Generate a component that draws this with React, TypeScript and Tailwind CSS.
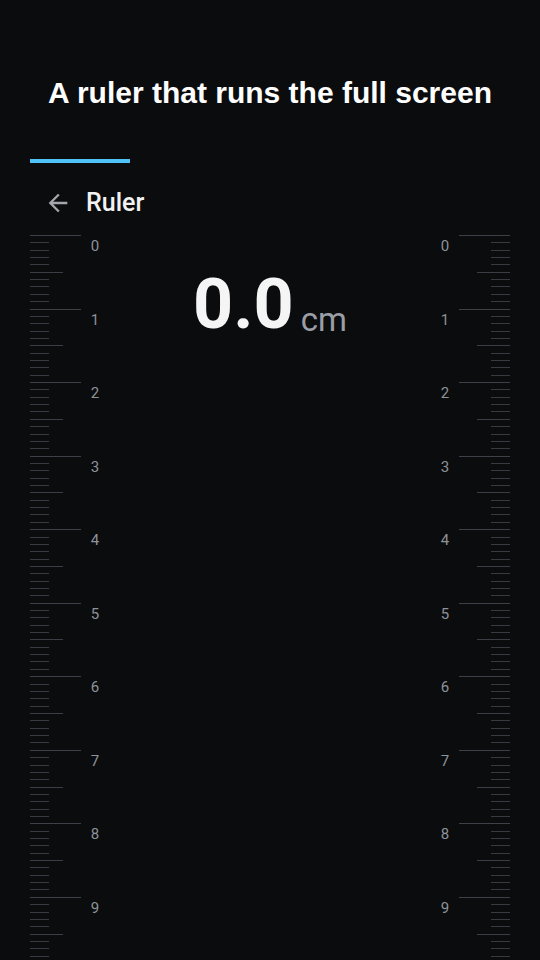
import { Fragment } from "react";

const CM_COUNT = 10;

function ArrowBack() {
  return (
    <svg width="28" height="28" viewBox="0 0 24 24" fill="#a3a6ad">
      <path d="M20 11H7.83l5.59-5.59L12 4l-8 8 8 8 1.41-1.41L7.83 13H20v-2z" />
    </svg>
  );
}

function Ticks({ side }: { side: "left" | "right" }) {
  const rows = Array.from({ length: 10 }, (_, i) => i);
  return (
    <div className={`flex w-[51px] flex-col ${side === "left" ? "items-start" : "items-end"}`}>
      {rows.map((i) => (
        <div key={i} className={`flex h-[7.355px] w-full shrink-0 flex-col ${side === "left" ? "items-start" : "items-end"}`}>
          <div
            className={`h-px shrink-0 ${
              i === 0 ? "w-[51px] bg-[#3d4046]" : i === 5 ? "w-[33px] bg-[#3a3d43]" : "w-[19px] bg-[#373a40]"
            }`}
          />
        </div>
      ))}
    </div>
  );
}

function Label({ n }: { n: number }) {
  return (
    <div className="flex w-[28px] justify-center">
      <span className="mt-[1px] font-['Roboto',sans-serif] text-[15px] leading-5 text-[#8e9299]">{n}</span>
    </div>
  );
}

function Ruler({ side }: { side: "left" | "right" }) {
  const cms = Array.from({ length: CM_COUNT }, (_, i) => i);
  return (
    <div className="flex flex-col">
      {cms.map((n) => (
        <div key={n} className="flex h-[73.55px] shrink-0 flex-row">
          {side === "left" ? (
            <Fragment>
              <Ticks side="left" />
              <Label n={n} />
            </Fragment>
          ) : (
            <Fragment>
              <Label n={n} />
              <Ticks side="right" />
            </Fragment>
          )}
        </div>
      ))}
    </div>
  );
}

export default function App() {
  return (
    <div className="flex h-[960px] w-[540px] flex-col overflow-hidden bg-[#0b0c0e]">
      <h1 className="shrink-0 pt-[77px] text-center font-['Liberation_Sans',Arial,sans-serif] text-[30px] font-bold leading-8 text-white">
        A ruler that runs the full screen
      </h1>

      <div className="ml-[30px] mt-[50px] h-[4px] w-[100px] shrink-0 bg-[#4fc3f7]" />

      <div className="mt-[20px] flex h-10 shrink-0 items-center">
        <div className="ml-[44px] flex items-center">
          <ArrowBack />
        </div>
        <span className="ml-[14px] font-['Roboto',sans-serif] text-[25px] font-medium text-[#f2f2f2]">Ruler</span>
      </div>

      <div className="mt-[12px] flex shrink-0 flex-row px-[30px]">
        <Ruler side="left" />
        <div className="flex flex-1 justify-center pt-[34px]">
          <div className="flex items-baseline font-['Roboto',sans-serif]">
            <span className="text-[70px] font-bold leading-none text-[#f5f5f5]">0.0</span>
            <span className="ml-[7px] translate-y-[3px] text-[33px] leading-none text-[#9a9ea6]">cm</span>
          </div>
        </div>
        <Ruler side="right" />
      </div>
    </div>
  );
}
